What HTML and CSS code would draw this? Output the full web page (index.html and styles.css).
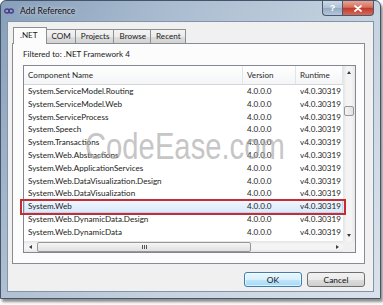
FILE: index.html
```html
<!DOCTYPE html>
<html lang="en">
<head>
  <meta charset="UTF-8" />
  <title>Add Reference</title>
  <link rel="stylesheet" href="styles.css">
</head>
<body>

  <div class="window">
    <div class="titlebar">
      <svg class="app-icon" viewBox="0 0 10 6" width="10" height="6">
        <ellipse cx="3" cy="3" rx="2.3" ry="2" fill="none" stroke="#4a3c8c" stroke-width="1.4"/>
        <ellipse cx="7" cy="3" rx="2.3" ry="2" fill="none" stroke="#4a3c8c" stroke-width="1.4"/>
      </svg>
      <span class="title">Add Reference</span>
      <div class="caption">
        <span class="cap-btn help">?</span>
        <span class="cap-btn close">
          <svg viewBox="0 0 8 7" width="8" height="7">
            <path d="M1 1 L7 6 M7 1 L1 6" stroke="#fff" stroke-width="1.7" stroke-linecap="round"/>
          </svg>
        </span>
      </div>
    </div>

    <div class="client">
      <div class="tabs">
        <div class="tab active">.NET</div>
        <div class="tab">COM</div>
        <div class="tab">Projects</div>
        <div class="tab">Browse</div>
        <div class="tab">Recent</div>
      </div>

      <div class="tab-panel">
        <div class="filter">Filtered to: .NET Framework 4</div>

        <div class="listview">
          <div class="lv-main">
            <div class="lv-header">
              <div class="col-name">Component Name</div>
              <div class="col-ver">Version</div>
              <div class="col-run">Runtime</div>
            </div>
            <div class="lv-row"><div class="col-name">System.ServiceModel.Routing</div><div class="col-ver">4.0.0.0</div><div class="col-run">v4.0.30319</div></div>
            <div class="lv-row"><div class="col-name">System.ServiceModel.Web</div><div class="col-ver">4.0.0.0</div><div class="col-run">v4.0.30319</div></div>
            <div class="lv-row"><div class="col-name">System.ServiceProcess</div><div class="col-ver">4.0.0.0</div><div class="col-run">v4.0.30319</div></div>
            <div class="lv-row"><div class="col-name">System.Speech</div><div class="col-ver">4.0.0.0</div><div class="col-run">v4.0.30319</div></div>
            <div class="lv-row"><div class="col-name">System.Transactions</div><div class="col-ver">4.0.0.0</div><div class="col-run">v4.0.30319</div></div>
            <div class="lv-row"><div class="col-name">System.Web.Abstractions</div><div class="col-ver">4.0.0.0</div><div class="col-run">v4.0.30319</div></div>
            <div class="lv-row"><div class="col-name">System.Web.ApplicationServices</div><div class="col-ver">4.0.0.0</div><div class="col-run">v4.0.30319</div></div>
            <div class="lv-row"><div class="col-name">System.Web.DataVisualization.Design</div><div class="col-ver">4.0.0.0</div><div class="col-run">v4.0.30319</div></div>
            <div class="lv-row"><div class="col-name">System.Web.DataVisualization</div><div class="col-ver">4.0.0.0</div><div class="col-run">v4.0.30319</div></div>
            <div class="lv-row selected"><div class="col-name">System.Web</div><div class="col-ver">4.0.0.0</div><div class="col-run">v4.0.30319</div></div>
            <div class="lv-row"><div class="col-name">System.Web.DynamicData.Design</div><div class="col-ver">4.0.0.0</div><div class="col-run">v4.0.30319</div></div>
            <div class="lv-row"><div class="col-name">System.Web.DynamicData</div><div class="col-ver">4.0.0.0</div><div class="col-run">v4.0.30319</div></div>
          </div>

          <div class="vscroll">
            <div class="arrow-btn"><span class="tri-up"></span></div>
            <div class="v-track"><div class="v-thumb"></div></div>
            <div class="arrow-btn"><span class="tri-down"></span></div>
          </div>

          <div class="hscroll">
            <div class="arrow-btn"><span class="tri-left"></span></div>
            <div class="h-thumb"><span class="grip"></span></div>
            <div class="h-track"></div>
            <div class="arrow-btn"><span class="tri-right"></span></div>
          </div>

          <div class="corner"></div>
        </div>
      </div>

      <div class="buttons">
        <button class="btn default">OK</button>
        <button class="btn">Cancel</button>
      </div>
    </div>
  </div>

  <div class="watermark">CodeEase.com</div>

</body>
</html>
```

FILE: styles.css
```css
* {
  box-sizing: border-box;
}

body {
  margin: 0;
  width: 383px;
  height: 305px;
  overflow: hidden;
  position: relative;
  background: #fff;
  font-family: Lato, "Liberation Sans", sans-serif;
  font-size: 8.1px;
  color: #1b1b1b;
}

/* Window frame */
.window {
  width: 381px;
  height: 299px;
  border: 1px solid #44546a;
  border-radius: 6px 6px 0 0;
  background:
    linear-gradient(to bottom, rgba(255,255,255,0) 0, rgba(255,255,255,.35) 100%),
    linear-gradient(to right, #879fba, #aabcd0 45%, #c6d3e0);
  box-shadow: 2px 3px 3px rgba(0,0,0,.45);
  display: flex;
  flex-direction: column;
}

.titlebar {
  height: 20px;
  display: flex;
  align-items: center;
  padding-left: 3px;
}

.app-icon {
  margin-right: 6px;
}

.title {
  font-size: 8.6px;
  color: #111;
  text-shadow: 0 0 4px rgba(255,255,255,.8);
}

.caption {
  margin-left: auto;
  margin-right: 6px;
  align-self: flex-start;
  display: flex;
}

.cap-btn {
  height: 15px;
  border: 1px solid #4b5a6e;
  border-top: none;
  display: flex;
  align-items: center;
  justify-content: center;
  color: #fff;
  font-weight: bold;
  font-size: 9px;
  font-family: "Liberation Sans", sans-serif;
}

.help {
  width: 20px;
  border-right: none;
  border-radius: 0 0 0 4px;
  background: linear-gradient(#ccd8e5, #aebfd3 50%, #95a9c1 51%, #b3c6db);
}

.close {
  width: 32px;
  border-radius: 0 0 4px 0;
  background: linear-gradient(#e8a493, #d5705f 45%, #c23a2c 52%, #d36b57);
}

/* Client area */
.client {
  flex: 1;
  margin: 0 6px 6px;
  background: #f0f0f0;
  border: 1px solid #8194aa;
  padding: 5px 8px 4px 4px;
  display: flex;
  flex-direction: column;
}

.tabs {
  display: flex;
  align-items: flex-end;
  height: 16px;
  padding-left: 1px;
}

.tab {
  height: 14px;
  line-height: 12px;
  padding: 0 4px 0 5px;
  margin-left: -1px;
  border: 1px solid #8e8f8f;
  border-bottom: none;
  background: linear-gradient(#f3f3f3, #ebebeb 50%, #dddddd 51%, #d3d3d3);
}

.tab.active {
  height: 17px;
  line-height: 15px;
  margin-left: 0;
  margin-bottom: -1px;
  padding: 0 8px 0 6px;
  background: #fcfcfc;
  position: relative;
  z-index: 1;
}

.tab-panel {
  height: 221px;
  border: 1px solid #898c95;
  background: #fcfcfc;
  padding: 4px 8px 0 10px;
}

.filter {
  line-height: 12px;
  margin-bottom: 5px;
}

/* List view */
.listview {
  height: 188px;
  border: 1px solid #828790;
  background: #fff;
  display: grid;
  grid-template-columns: 1fr 12px;
  grid-template-rows: 1fr 11px;
}

.lv-main {
  grid-column: 1;
  grid-row: 1;
}

.lv-header {
  display: flex;
  height: 19px;
  line-height: 18px;
  border-bottom: 1px solid #d5d5d5;
  background: linear-gradient(#fff, #f4f5f7);
  color: #2a2a2a;
}

.lv-header > div {
  border-right: 1px solid #e3e4e6;
}

.lv-row {
  display: flex;
  height: 12.8px;
  line-height: 12.8px;
}

.col-name {
  width: 219px;
  padding-left: 4px;
}

.col-ver {
  width: 53px;
  padding-left: 4px;
}

.col-run {
  width: 47px;
  padding-left: 4px;
  white-space: nowrap;
}

.lv-row.selected {
  position: relative;
  background: linear-gradient(#f1f7fe, #d8e8fb);
  box-shadow: inset 0 0 0 1px #bcd5f2;
}

.lv-row.selected::after {
  content: '';
  position: absolute;
  left: -4px;
  right: -3px;
  top: -1px;
  bottom: -2px;
  border: 2px solid #c42d34;
}

/* Scroll bars */
.vscroll {
  grid-column: 2;
  grid-row: 1;
  display: flex;
  flex-direction: column;
  background: linear-gradient(to right, #e4e4e4, #f4f4f4 30%, #f4f4f4 70%, #e6e6e6);
}

.arrow-btn {
  width: 12px;
  height: 12px;
  flex: none;
  display: flex;
  align-items: center;
  justify-content: center;
}

.hscroll .arrow-btn {
  height: 11px;
}

.v-track {
  flex: 1;
}

.v-thumb {
  margin: 28px 0 0 1px;
  width: 10px;
  height: 10px;
  border: 1px solid #979797;
  border-radius: 2px;
  background: linear-gradient(to right, #f5f5f5, #e2e2e2);
}

.hscroll {
  grid-column: 1;
  grid-row: 2;
  display: flex;
  align-items: center;
  background: linear-gradient(#e4e4e4, #f4f4f4 30%, #f4f4f4 70%, #e6e6e6);
}

.h-thumb {
  width: 214px;
  height: 10px;
  margin-left: 1px;
  border: 1px solid #979797;
  border-radius: 2px;
  background: linear-gradient(#f5f5f5, #e0e0e0);
  display: flex;
  align-items: center;
  justify-content: center;
}

.grip {
  width: 5px;
  height: 4px;
  background: repeating-linear-gradient(to right, #555 0 1px, transparent 1px 2px);
}

.h-track {
  flex: 1;
}

.corner {
  grid-column: 2;
  grid-row: 2;
  background: #f0f0f0;
}

.tri-up,
.tri-down,
.tri-left,
.tri-right {
  width: 0;
  height: 0;
  border: 2.5px solid transparent;
}

.tri-up {
  border-bottom: 3px solid #3c3c3c;
  border-top-width: 0;
}

.tri-down {
  border-top: 3px solid #3c3c3c;
  border-bottom-width: 0;
}

.tri-left {
  border-right: 3px solid #3c3c3c;
  border-left-width: 0;
}

.tri-right {
  border-left: 3px solid #3c3c3c;
  border-right-width: 0;
}

/* Dialog buttons */
.buttons {
  display: flex;
  justify-content: flex-end;
  gap: 5px;
  margin-top: 8px;
}

.btn {
  width: 58px;
  height: 15px;
  padding: 0;
  border: 1px solid #707070;
  border-radius: 3px;
  font: inherit;
  font-size: 8.4px;
  color: #111;
  background: linear-gradient(#f2f2f2, #ebebeb 50%, #dddddd 51%, #cfcfcf);
}

.btn.default {
  border-color: #3c7fb1;
  background: linear-gradient(#eaf6fd, #d9f0fc 50%, #bee6fd 51%, #a7d9f5);
  box-shadow: inset 0 0 0 1px rgba(255,255,255,.6);
}

/* Site watermark over the screenshot */
.watermark {
  position: absolute;
  left: 85px;
  top: 128px;
  font: 37px/37px "Liberation Sans", sans-serif;
  color: rgba(165,165,165,.65);
  transform: scaleX(.79);
  transform-origin: 0 0;
  pointer-events: none;
  white-space: nowrap;
}
```
